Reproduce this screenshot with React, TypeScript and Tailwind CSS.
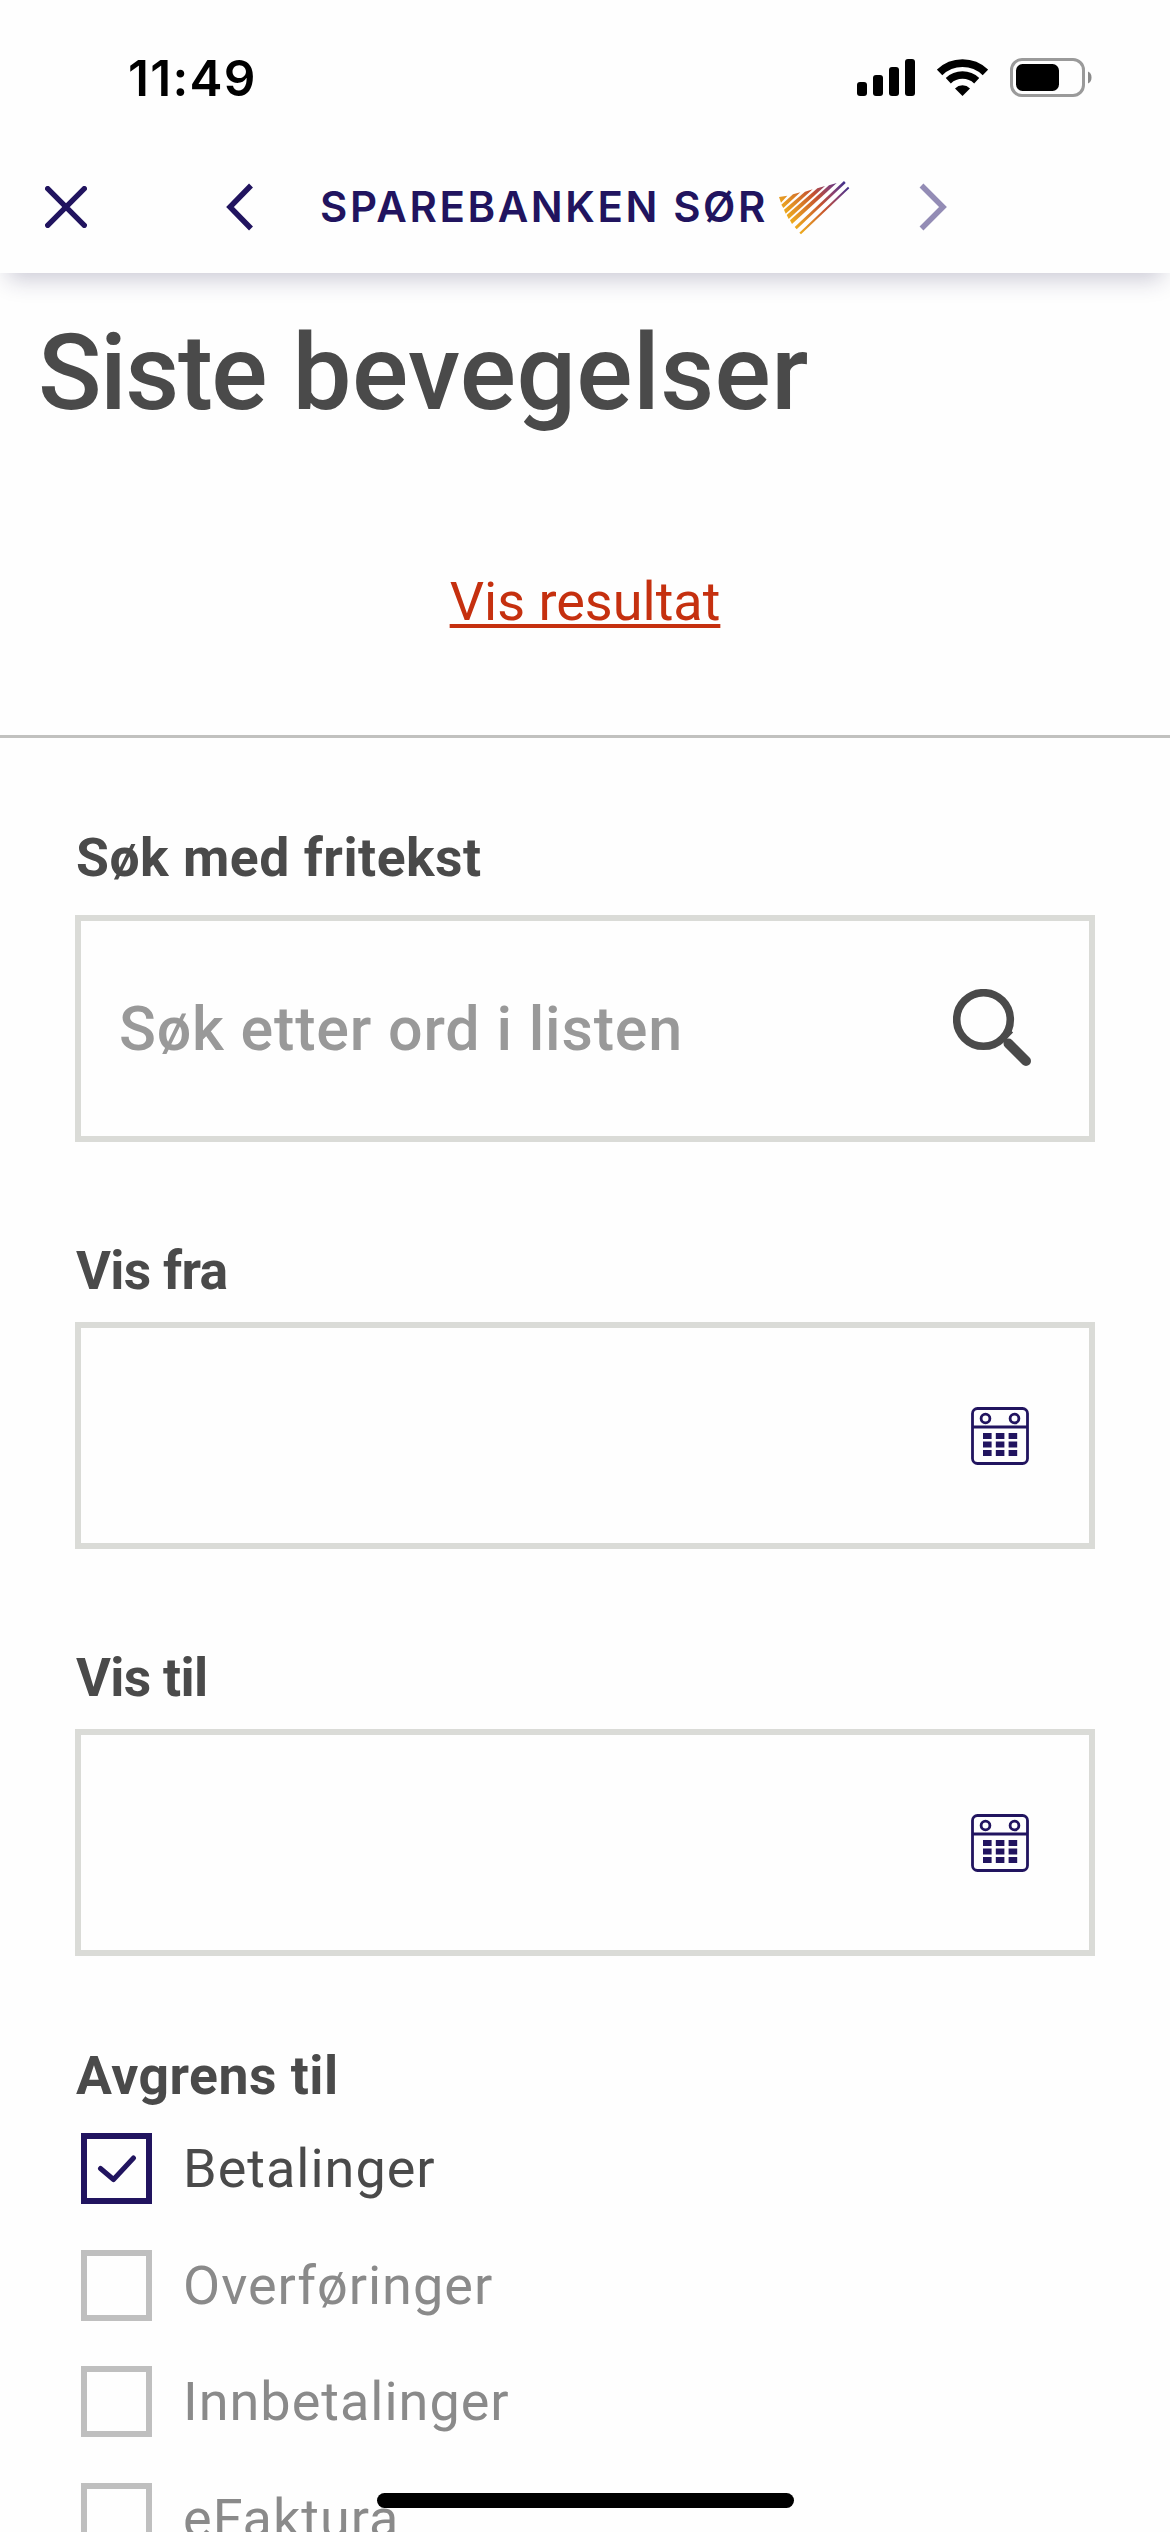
const filters = [
  { label: 'Betalinger', checked: true },
  { label: 'Overføringer', checked: false },
  { label: 'Innbetalinger', checked: false },
  { label: 'eFaktura', checked: false },
];

function StatusBar() {
  return (
    <div className="flex h-[108px] items-end justify-between pr-[78px] pl-[128px]">
      <span className="h-[60px] font-['Inter',sans-serif] text-[49.5px] leading-[60px] font-semibold tracking-[1.3px] text-black">
        11:49
      </span>
      <div className="flex h-[61px] items-center">
        <svg width="58" height="37" viewBox="0 0 58 37">
          <rect x="0" y="23" width="10" height="14" rx="3" />
          <rect x="16" y="16" width="10" height="21" rx="3" />
          <rect x="32" y="8" width="10" height="29" rx="3" />
          <rect x="48" y="0" width="10" height="37" rx="3" />
        </svg>
        <svg className="ml-[22px]" width="51" height="37" viewBox="0 0 51 37" fill="none" stroke="#000">
          <path d="M2.6 13.4A33 33 0 0 1 48.4 13.4" strokeWidth="7.8" />
          <path d="M11.3 21.7A20.7 20.7 0 0 1 39.7 21.7" strokeWidth="7.4" />
          <path d="M25.5 37L18 29.4A10.8 10.8 0 0 1 33 29.4Z" fill="#000" stroke="none" />
        </svg>
        <svg className="ml-[22px]" width="82" height="39" viewBox="0 0 82 39">
          <rect x="1.5" y="1.5" width="72" height="36" rx="10.5" fill="none" stroke="#9a9a9a" strokeWidth="3" />
          <rect x="6" y="6" width="43" height="27" rx="6.5" />
          <path d="M78 13.5C82.7 15 82.7 24 78 25.5Z" fill="#8a8a8a" />
        </svg>
      </div>
    </div>
  );
}

function BankLogo() {
  return (
    <svg width="80" height="60" viewBox="0 0 240 180">
      <defs>
        <linearGradient id="stripes" gradientUnits="userSpaceOnUse" x1="40" y1="130" x2="200" y2="0">
          <stop offset="0" stopColor="#f0b01c" />
          <stop offset="0.25" stopColor="#df8a25" />
          <stop offset="0.55" stopColor="#c4502f" />
          <stop offset="0.78" stopColor="#8a4070" />
          <stop offset="1" stopColor="#41308a" />
        </linearGradient>
      </defs>
      <g fill="url(#stripes)">
        <path d="M18 60L43 56L24 77Z" />
        <path d="M25 83L60 52L82 46L31 93Z" />
        <path d="M33 98L96 44L119 37L38 110Z" />
        <path d="M41 114L133 34L156 27L47 126Z" />
        <path d="M51 130L168 25L191 18L57 141Z" />
        <path d="M65 150L213 12L218 18L71 157Z" />
        <path d="M79 167L225 29L229 34L84 172Z" />
      </g>
    </svg>
  );
}

function NavBar() {
  return (
    <div className="mt-[33px] flex h-[132px] items-center text-[#21145f]">
      <svg className="ml-[45px]" width="42" height="42" viewBox="0 0 42 42" fill="none" stroke="currentColor" strokeWidth="5.4" strokeLinecap="round">
        <path d="M2.7 2.7L39.3 39.3M39.3 2.7L2.7 39.3" />
      </svg>
      <svg className="ml-[139px]" width="28" height="48" viewBox="0 0 28 48" fill="none" stroke="currentColor" strokeWidth="5.5">
        <path d="M25 2.5L4 24L25 45.5" />
      </svg>
      <span className="ml-[66px] w-[453px] pb-px font-['Inter',sans-serif] text-[42px] leading-[60px] font-semibold tracking-[2.6px] whitespace-nowrap">
        SPAREBANKEN SØR
      </span>
      <BankLogo />
      <svg className="ml-[66px]" width="28" height="48" viewBox="0 0 28 48" fill="none" stroke="#938cb5" strokeWidth="5.5">
        <path d="M2.5 2.5L24 24L2.5 45.5" />
      </svg>
    </div>
  );
}

function SearchIcon() {
  return (
    <svg width="80" height="80" viewBox="0 0 80 80" fill="none" stroke="#4a4a4a">
      <circle cx="30.5" cy="30.5" r="26.8" strokeWidth="7.6" />
      <path d="M49 50.5L58 41.5" strokeWidth="6" />
      <path d="M55.5 54.5L73 72" strokeWidth="10" strokeLinecap="round" />
    </svg>
  );
}

function CalendarIcon() {
  return (
    <svg width="58" height="58" viewBox="0 0 58 58" fill="none" stroke="#21145f">
      <rect x="1.5" y="1.5" width="55" height="55" rx="5" strokeWidth="2.8" />
      <path d="M1 20H57" strokeWidth="2.8" />
      <circle cx="14.5" cy="11.5" r="4.4" strokeWidth="2.8" />
      <circle cx="43.5" cy="11.5" r="4.4" strokeWidth="2.8" />
      <g fill="#21145f" stroke="none">
        {[26, 34.5, 43].map((y) =>
          [12, 24.8, 37.6].map((x) => <rect key={`${x}-${y}`} x={x} y={y} width="8.6" height="6" />)
        )}
      </g>
    </svg>
  );
}

function Label({ children, tight = false }: { children: string; tight?: boolean }) {
  return (
    <div
      className={`pl-[1px] text-[53.5px] leading-[64px] font-bold ${
        tight ? 'tracking-[-0.7px]' : 'tracking-[0.5px]'
      }`}
    >
      {children}
    </div>
  );
}

function DateField({ label }: { label: string }) {
  return (
    <div className="mt-[97px]">
      <Label tight>{label}</Label>
      <div className="mt-[19px] flex h-[227px] items-center justify-end border-6 border-[#dadbd7] pr-[60px]">
        <CalendarIcon />
      </div>
    </div>
  );
}

function FilterRow({ label, checked }: { label: string; checked: boolean }) {
  return (
    <div className="flex items-center gap-[31px]">
      <div
        className={`flex size-[71px] shrink-0 items-center justify-center border-6 ${
          checked ? 'border-[#21145f]' : 'border-[#bfbfbf]'
        }`}
      >
        {checked && (
          <svg width="40" height="28" viewBox="0 0 40 28" fill="none" stroke="#21145f" strokeWidth="5" strokeLinecap="round" strokeLinejoin="round">
            <path d="M3.5 13.5L16.5 24.5L36.5 3" />
          </svg>
        )}
      </div>
      <span
        className={`text-[54px] leading-[71px] tracking-[1px] ${checked ? 'text-[#4a4a4a]' : 'text-[#8a8a8a]'}`}
      >
        {label}
      </span>
    </div>
  );
}

export default function App() {
  return (
    <div className="relative h-[2532px] w-[1170px] overflow-hidden bg-[#fefefe] font-['Roboto',sans-serif] text-[#4a4a4a]">
      <header className="h-[273px] bg-[#fefefe] shadow-[0_14px_22px_-8px_rgba(33,30,80,0.24)]">
        <StatusBar />
        <NavBar />
      </header>

      <h1 className="mt-[41px] pl-[38px] text-[105px] leading-[120px] font-medium tracking-[0.4px]">
        <span className="tracking-[-1.5px]">Siste</span> bevegelser
      </h1>

      <div className="mt-[136px] text-center text-[54px] leading-[64px]">
        <a className="text-[#c5300f] underline decoration-4 underline-offset-[4px]">Vis resultat</a>
      </div>

      <main className="mt-[101px] border-t-3 border-[#c1c1bf] px-[75px] pt-[88px]">
        <Label>Søk med fritekst</Label>
        <div className="mt-[25px] flex h-[227px] items-center justify-between border-6 border-[#dadbd7] pr-[56px] pl-[38px]">
          <span className="pt-[2px] text-[61px] font-medium tracking-[0.8px] text-[#999999]">
            Søk etter ord i listen
          </span>
          <SearchIcon />
        </div>

        <DateField label="Vis fra" />
        <DateField label="Vis til" />

        <div className="mt-[88px]">
          <Label>Avgrens til</Label>
          <div className="mt-[25px] flex flex-col gap-[45.5px] pl-[6px]">
            {filters.map((f) => (
              <FilterRow key={f.label} {...f} />
            ))}
          </div>
        </div>
      </main>

      {/* home indicator */}
      <div className="absolute bottom-[24px] left-[377px] h-[15px] w-[417px] rounded-full bg-black" />
    </div>
  );
}
